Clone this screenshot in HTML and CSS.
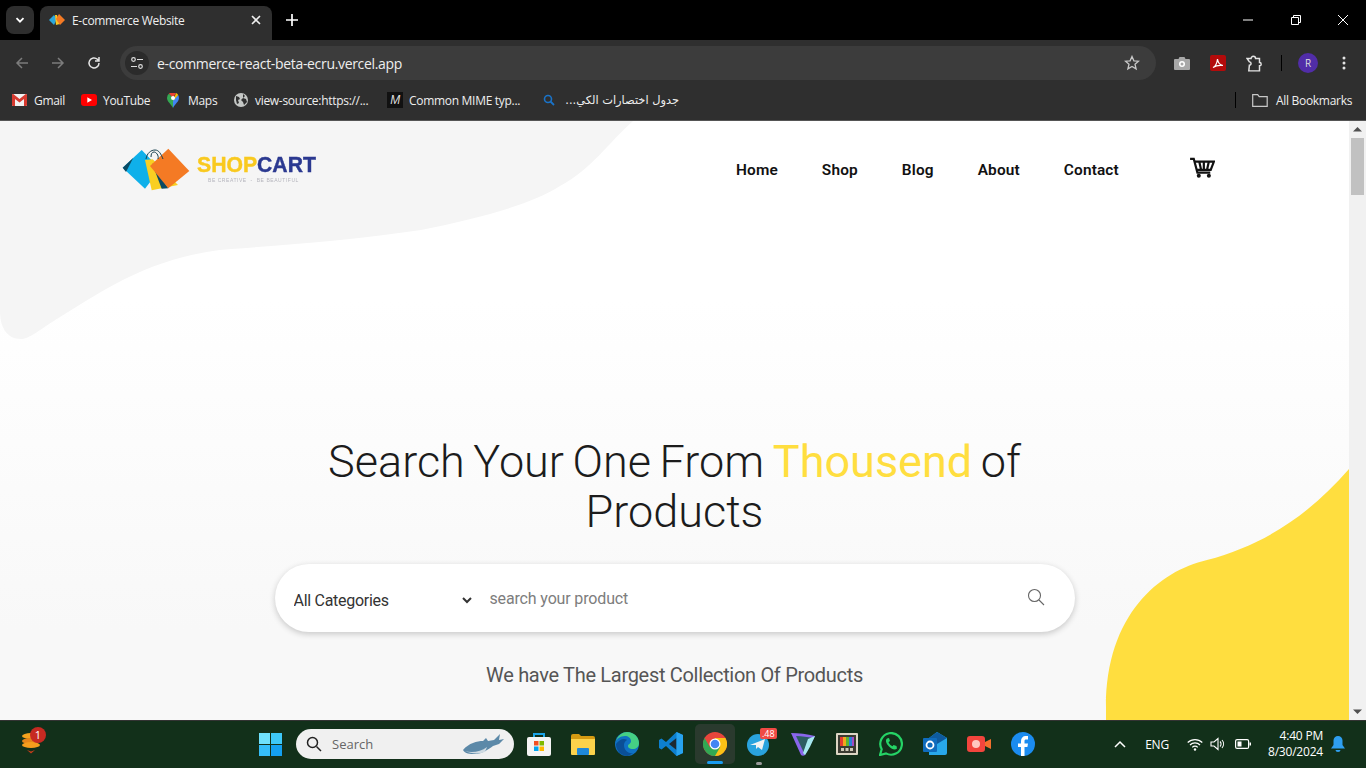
FILE: index.html
```html
<!DOCTYPE html>
<html lang="en">
<head>
<meta charset="utf-8">
<title>E-commerce Website</title>
<link rel="stylesheet" href="styles.css">
</head>
<body>
<div class="app">
  <div class="tabstrip">
    <button class="tab-menu"><svg width="12" height="12" viewBox="0 0 12 12"><path d="M2.5 4.2 6 7.7l3.5-3.5" fill="none" stroke="#fff" stroke-width="1.8"/></svg></button>
    <div class="tab">
      <svg class="favicon" width="16" height="12" viewBox="0 0 16 12"><path d="M0 6 5 1l3 4-3 6z" fill="#2aa7dc"/><path d="M6 1h2l3 9-4 1z" fill="#f9c622"/><path d="M10 0l6 6-5 5-4-6z" fill="#f47a24"/></svg>
      <span class="tab-title">E-commerce Website</span>
      <svg class="tab-close" width="10" height="10" viewBox="0 0 10 10"><path d="M1 1l8 8M9 1 1 9" stroke="#eee" stroke-width="1.6"/></svg>
    </div>
    <svg class="new-tab" width="12" height="12" viewBox="0 0 12 12"><path d="M6 0v12M0 6h12" stroke="#fff" stroke-width="1.7"/></svg>
    <div class="win-controls">
      <svg width="10" height="10" viewBox="0 0 10 10"><path d="M0 5h10" stroke="#fff"/></svg>
      <svg width="10" height="10" viewBox="0 0 10 10"><path d="M.5 2.5h7v7h-7zM2.5 2.5V.5h7v7h-2" fill="none" stroke="#fff"/></svg>
      <svg width="10" height="10" viewBox="0 0 10 10"><path d="M0 0l10 10M10 0 0 10" stroke="#fff"/></svg>
    </div>
  </div>

  <div class="toolbar">
    <svg class="nav-ico" width="14" height="14" viewBox="0 0 14 14"><path d="M13 7H2M7 2 2 7l5 5" fill="none" stroke="#7c7c7c" stroke-width="1.5"/></svg>
    <svg class="nav-ico" width="14" height="14" viewBox="0 0 14 14"><path d="M1 7h11M7 2l5 5-5 5" fill="none" stroke="#7c7c7c" stroke-width="1.5"/></svg>
    <svg class="nav-ico" width="14" height="14" viewBox="0 0 14 14"><path d="M12 7a5 5 0 1 1-1.6-3.7L12 5M12 1v4H8" fill="none" stroke="#e4e4e4" stroke-width="1.5"/></svg>
    <div class="omnibox">
      <span class="site-btn"><svg width="14" height="14" viewBox="0 0 14 14"><circle cx="3.5" cy="3.5" r="1.8" fill="none" stroke="#ddd" stroke-width="1.2"/><path d="M7 3.5h6M1 10.5h6" stroke="#ddd" stroke-width="1.2"/><circle cx="10.5" cy="10.5" r="1.8" fill="none" stroke="#ddd" stroke-width="1.2"/></svg></span>
      <span class="url">e-commerce-react-beta-ecru.vercel.app</span>
      <svg class="star" width="16" height="16" viewBox="0 0 16 16"><path d="M8 1.5l1.9 4.3 4.6.4-3.5 3 1.1 4.6L8 11.4l-4.1 2.4L5 9.2l-3.5-3 4.6-.4z" fill="none" stroke="#c8c8c8" stroke-width="1.3"/></svg>
    </div>
    <div class="tool-icons">
      <svg class="t-cam" width="16" height="14" viewBox="0 0 16 14"><path d="M1 3h3.500l1-2h5l1 2H15a1 1 0 0 1 1 1v9a1 1 0 0 1-1 1H1a1 1 0 0 1-1-1V4a1 1 0 0 1 1-1z" fill="#a8a8a8"/><circle cx="8" cy="8" r="3" fill="#fff"/><circle cx="8" cy="8" r="1.500" fill="#a8a8a8"/></svg>
      <svg class="t-pdf" width="16" height="16" viewBox="0 0 16 16"><rect width="16" height="16" rx="2" fill="#b30b0b"/><path d="M3 12.500c2-1 4-4 4.500-8.500.5 4 2.500 6 5.500 6.500-3-.5-7 0-10 2z" fill="none" stroke="#fff" stroke-width="1.200"/></svg>
      <svg class="t-ext" width="18" height="18" viewBox="0 0 16 16"><path d="M1 4h3.500a2 2 0 0 1 4 0H12v3.500a1.500 1.500 0 0 1 0 3V15H2.500L3 10a1.500 1.500 0 0 0 0-3L1 4z" fill="none" stroke="#e4e4e4" stroke-width="1.300"/></svg>
      <span class="t-sep"></span>
      <span class="avatar">R</span>
      <svg class="t-more" width="4" height="14" viewBox="0 0 4 14"><circle cx="2" cy="2" r="1.500" fill="#e4e4e4"/><circle cx="2" cy="7" r="1.500" fill="#e4e4e4"/><circle cx="2" cy="12" r="1.500" fill="#e4e4e4"/></svg>
    </div>
  </div>

  <div class="bookmarks">
    <div class="bm bm-gmail"><svg width="15" height="12" viewBox="0 0 15 12"><rect width="15" height="12" rx="1" fill="#f2f2f2"/><path d="M0 1v10a1 1 0 0 0 1 1h2V5l4.500 3.500L12 5v7h2a1 1 0 0 0 1-1V1a1 1 0 0 0-1.600-.8L7.500 5 1.600.2A1 1 0 0 0 0 1z" fill="#d63a30"/></svg><span>Gmail</span></div>
    <div class="bm bm-yt"><svg width="16" height="12" viewBox="0 0 16 12"><rect width="16" height="12" rx="3" fill="#f00"/><path d="M6.300 3.300v5.400L11 6z" fill="#fff"/></svg><span>YouTube</span></div>
    <div class="bm bm-maps"><svg width="12" height="15" viewBox="0 0 12 15"><path d="M6 15C4 11 0 8.500 0 5a6 6 0 0 1 2-4.400L6 5z" fill="#34a853"/><path d="M6 15c2-4 6-6.500 6-10 0-1-.3-2-.8-2.900L6 5z" fill="#4285f4"/><path d="M2 .6A6 6 0 0 1 9 .1L6 5z" fill="#ea4335"/><path d="M9 .1a6 6 0 0 1 2.200 2L6 8z" fill="#fbbc04"/><circle cx="6" cy="5" r="2" fill="#fff"/></svg><span>Maps</span></div>
    <div class="bm bm-globe"><svg width="14" height="14" viewBox="0 0 14 14"><circle cx="7" cy="7" r="7" fill="#c4c7c5"/><path d="M2 3l3 1 1 2-2 1 1 3-2 1-1-4zM9 1l2 2-2 2 3 1 1 3-3 3-1-3-2-2 2-2z" fill="#2f2f2f"/></svg><span>view-source:https://...</span></div>
    <div class="bm bm-mime"><span class="m-box">M</span><span>Common MIME typ...</span></div>
    <div class="bm bm-find"><svg width="12" height="12" viewBox="0 0 12 12"><circle cx="5" cy="5" r="3.500" fill="none" stroke="#1a73c8" stroke-width="1.600"/><path d="M7.500 7.500 11 11" stroke="#1a73c8" stroke-width="1.800"/></svg><span class="ar" dir="rtl">جدول اختصارات الكي...</span></div>
    <span class="bm-sep"></span>
    <div class="bm bm-all"><svg width="16" height="13" viewBox="0 0 16 13"><path d="M.7.700h5l1.500 2h8v9.600H.7z" fill="none" stroke="#c8c8c8" stroke-width="1.200"/></svg><span>All Bookmarks</span></div>
  </div>

  <div class="viewport">
    <main class="page">
      <svg class="blob blob-top" width="640" height="225" viewBox="0 0 640 225"><path d="M0 0H633C608 22 592 48 560 65C530 84 480 97 421 109C360 118 290 124 231 128C150 134 95 175 60 196C40 208 30 218 21 218C6 218 0 205 0 190Z" fill="#f5f5f5"/></svg>
      <svg class="blob blob-yellow" width="245" height="255" viewBox="0 0 245 255"><path d="M245 4C205 50 160 80 103 95C55 106 2 150 2 242V255H245Z" fill="#ffde3f"/></svg>

      <header class="site-header">
        <a class="logo">
          <svg class="logo-mark" width="70" height="46" viewBox="0 0 70 46">
            <path d="M19.700 3 .7 20.700 23 41.700 38 22z" fill="#0fb0ea"/>
            <path d="M.7 20.700 11.300 10.700 4 25z" fill="#0b4a63"/>
            <path d="M23 13 30.700 12.300 56 38 29.700 43.300z" fill="#f9cf22"/>
            <path d="M30 16 46.300 41.300 39.700 41.700z" fill="#0b4a63"/>
            <path d="M46.300 1.700 67.300 24 46.300 41.300 28 19z" fill="#f47a24"/>
            <path d="M24 12c1-6 5-9 9-9s6 4 8 9M29 10c0-3 1-5 3-5s5 3 4 7" fill="none" stroke="#17414f" stroke-width="1"/>
          </svg>
          <span class="logo-text">
            <span class="logo-name"><span class="logo-shop">SHOP</span><span class="logo-cart">CART</span></span>
            <span class="logo-tag">BE CREATIVE &nbsp;-&nbsp; BE BEAUTIFUL</span>
          </span>
        </a>
        <nav class="site-nav">
          <a>Home</a><a>Shop</a><a>Blog</a><a>About</a><a>Contact</a>
        </nav>
        <svg class="cart" width="26" height="22" viewBox="0 0 28 24"><path d="M1 2h4l4 15h14" fill="none" stroke="#111" stroke-width="2.400"/><path d="M5.500 5H27l-3.500 9H8M11 5l2 9M16 5v9M21.500 5l-2 9" fill="none" stroke="#111" stroke-width="2.400"/><circle cx="10.500" cy="20.500" r="2.200" fill="#111"/><circle cx="21.500" cy="20.500" r="2.200" fill="#111"/></svg>
      </header>

      <section class="hero">
        <h1 class="hero-title">Search Your One From <span class="accent">Thousend</span> of Products</h1>
        <form class="search">
          <select class="search-cat"><option>All Categories</option></select>
          <input class="search-input" type="text" placeholder="search your product">
          <svg class="search-ico" width="18" height="18" viewBox="0 0 18 18"><circle cx="7.500" cy="7.500" r="6" fill="none" stroke="#666" stroke-width="1.100"/><path d="M12 12l5 5" stroke="#666" stroke-width="1.100"/></svg>
        </form>
        <p class="hero-sub">We have The Largest Collection Of Products</p>
      </section>
    </main>
    <aside class="scrollbar">
      <svg width="17" height="17" viewBox="0 0 17 17"><path d="M4 10.500 8.500 6l4.500 4.500z" fill="#505050"/></svg>
      <span class="thumb"></span>
      <svg width="17" height="17" viewBox="0 0 17 17"><path d="M4 6.500 8.500 11 13 6.500z" fill="#505050"/></svg>
    </aside>
  </div>

  <footer class="taskbar">
    <div class="tb-left">
      <svg width="28" height="32" viewBox="0 0 28 32"><ellipse cx="11" cy="11" rx="9" ry="3" fill="#f4a21e"/><ellipse cx="10" cy="16" rx="8" ry="3" fill="#e5851a"/><ellipse cx="11" cy="20" rx="9" ry="3" fill="#f49d1d"/><path d="M7 25l4 3.500 4-3.500-4 1.500z" fill="#c93c1a"/></svg>
      <span class="tb-badge">1</span>
    </div>
    <div class="tb-center">
      <span class="tb-slot tb-win"><svg width="23" height="23" viewBox="0 0 23 23"><path d="M0 0h11v11H0z" fill="#6fe0fb"/><path d="M12 0h11v11H12z" fill="#3ec8f8"/><path d="M0 12h11v11H0z" fill="#35bdf8"/><path d="M12 12h11v11H12z" fill="#14a0f0"/></svg></span>
      <div class="tb-search">
        <svg width="16" height="16" viewBox="0 0 16 16"><circle cx="6.500" cy="6.500" r="5" fill="none" stroke="#222" stroke-width="1.500"/><path d="M10.500 10.500 15 15" stroke="#222" stroke-width="1.500"/></svg>
        <span>Search</span>
        <svg class="shark" width="42" height="22" viewBox="0 0 42 22"><path d="M0 17c6-7 14-9 20-9l3-3 2 3 6-1 6-6-1 6 5-1-5 5-6 2c-4 3-11 8-18 8-5 0-10 0-12-4z" fill="#5c89a8"/><path d="M2 18c6 2 16 1 22-4l-2 5c-5 2-14 2-20-1z" fill="#cfdbe2"/></svg>
      </div>
      <span class="tb-slot"><svg width="24" height="24" viewBox="0 0 24 24"><path d="M7 5V2h10v3" fill="none" stroke="#1ba4e8" stroke-width="2"/><rect y="5" width="24" height="19" rx="2" fill="#f4f4f4"/><path d="M7 9h4.500v4.500H7z" fill="#f25022"/><path d="M12.500 9H17v4.500h-4.500z" fill="#7fba00"/><path d="M7 14.500h4.500V19H7z" fill="#00a4ef"/><path d="M12.500 14.500H17V19h-4.500z" fill="#ffb900"/></svg></span>
      <span class="tb-slot"><svg width="24" height="21" viewBox="0 0 24 21"><path d="M0 2a2 2 0 0 1 2-2h6l2 2h12a2 2 0 0 1 2 2v3H0z" fill="#d49a12"/><path d="M0 5h24v15a1 1 0 0 1-1 1H1a1 1 0 0 1-1-1z" fill="#fbd24b"/><rect x="6" y="14" width="12" height="7" rx="1" fill="#1e88d8"/></svg></span>
      <span class="tb-slot"><svg width="24" height="24" viewBox="0 0 24 24"><circle cx="12" cy="12" r="12" fill="#0f71c4"/><path d="M1 9C3 3 8 0 12 0c7 0 12 5 12 11 0 4-3 6-6 6-4 0-5-2-5-3 0-2 3-2 3-5 0-3-3-5-6-5-5 0-8 3-9 5z" fill="#45cf84"/><path d="M9 13c0 5 4 9 9 8l-5 3C6 24 1 19 1 12c2-3 5-5 8-5 2 0 3 1 3 1-2 1-3 3-3 5z" fill="#0a4f96"/></svg></span>
      <span class="tb-slot"><svg width="24" height="24" viewBox="0 0 24 24"><path d="M17.500 0 24 3v18l-6.500 3L7 14l-4.500 3.500L0 16V8l2.500-1.500L7 10z" fill="#0d7fcf"/><path d="M17.500 6v12L10 12z" fill="#1f1f1f" opacity=".9"/><path d="M17.500 0 24 3v18l-6.500 3z" fill="#28a3ef"/></svg></span>
      <span class="tb-slot tb-active"><svg width="24" height="24" viewBox="0 0 24 24"><circle cx="12" cy="12" r="12" fill="#e8453c"/><path d="M12 24A12 12 0 0 0 22.400 6H12l-1 5z" fill="#fbc116"/><path d="M12 24 17.200 15 12 12 6.800 15 1.600 6A12 12 0 0 0 12 24z" fill="#32a853"/><circle cx="12" cy="12" r="5.500" fill="#fff"/><circle cx="12" cy="12" r="4.300" fill="#4285f4"/></svg><i class="tb-line"></i></span>
      <span class="tb-slot"><svg width="24" height="24" viewBox="0 0 24 24"><circle cx="11" cy="13" r="11" fill="#2aa3de"/><path d="M3 13l15-6-3 11-4-3-2 2v-4z" fill="#f3f3f3"/></svg><b class="tg-badge">.48</b><i class="tb-dot"></i></span>
      <span class="tb-slot"><svg width="24" height="24" viewBox="0 0 24 24"><path d="M0 1c8 0 16 1 24 3L14 23c-1 1-3 1-4 0z" fill="#8a66ec"/><path d="M5 4c6 0 12 1 16 2l-8 15z" fill="#2c5c62"/><path d="M14 23c3-4 7-12 10-19l-7 3-5 14z" fill="#a6e9ef"/></svg></span>
      <span class="tb-slot"><svg width="22" height="22" viewBox="0 0 22 22"><rect width="22" height="22" rx="1" fill="#dcd6c4"/><rect x="2" y="2" width="18" height="18" fill="#3b3b32"/><path d="M4 4h3v9H4z" fill="#e53b30"/><path d="M7 4h3v9H7z" fill="#f2a81d"/><path d="M10 4h3v9h-3z" fill="#5cb531"/><path d="M13 4h3v9h-3z" fill="#2e7ed6"/><path d="M16 4h2v9h-2z" fill="#a24bc4"/><path d="M5 15h3v3H5zM9.500 15h3v3h-3zM14 15h3v3h-3z" fill="#cfcab8"/></svg></span>
      <span class="tb-slot"><svg width="24" height="24" viewBox="0 0 24 24"><path d="M1 23l1.700-5.800A10.800 10.800 0 1 1 7 21.400z" fill="none" stroke="#25d366" stroke-width="2.200"/><path d="M8 6.500c-2 1.500-1 5 2 8s6 4 8 2l-.5-2.500-3-1-1 1.300c-2-1-3-2-4-4L11 9l-1-3z" fill="#25d366"/></svg></span>
      <span class="tb-slot"><svg width="24" height="24" viewBox="0 0 24 24"><path d="M6 6l8-6 10 6v15a2 2 0 0 1-2 2H6z" fill="#28a8ea"/><path d="M14 0l10 6-10 6-8-6z" fill="#0e5a9e"/><rect y="6" width="14" height="14" rx="1" fill="#0f6cbd"/><circle cx="7" cy="13" r="3.500" fill="none" stroke="#fff" stroke-width="1.800"/></svg></span>
      <span class="tb-slot"><svg width="24" height="16" viewBox="0 0 24 16"><rect width="18" height="16" rx="3" fill="#f2453d"/><circle cx="9" cy="8" r="4" fill="#ffc9c2"/><path d="M18 6l6-3v10l-6-3z" fill="#f2702d"/></svg></span>
      <span class="tb-slot"><svg width="24" height="24" viewBox="0 0 24 24"><circle cx="12" cy="12" r="12" fill="#1b8cf0"/><path d="M10 24v-9H7v-3.500h3V9c0-3 2-5 4.500-5H17v3.500h-2c-1 0-1.500.5-1.500 1.500v2.500H17l-.6 3.500h-2.900V24z" fill="#fff"/></svg></span>
    </div>
    <div class="tb-tray">
      <svg class="tr-caret" width="12" height="8" viewBox="0 0 12 8"><path d="M1 7l5-5 5 5" fill="none" stroke="#fff" stroke-width="1.500"/></svg>
      <span class="tr-lang">ENG</span>
      <svg class="tr-wifi" width="16" height="13" viewBox="0 0 16 13"><path d="M.7 4.500a10.500 10.500 0 0 1 14.600 0M3 7a7 7 0 0 1 10 0M5.300 9.300a3.600 3.600 0 0 1 5.400 0" fill="none" stroke="#fff" stroke-width="1.200"/><circle cx="8" cy="11.500" r="1.200" fill="#fff"/></svg>
      <svg class="tr-vol" width="16" height="14" viewBox="0 0 16 14"><path d="M1 5h3l4-3.500v11L4 9H1z" fill="none" stroke="#fff" stroke-width="1.100"/><path d="M10 4.500a3.500 3.500 0 0 1 0 5M12 3a6 6 0 0 1 0 8" fill="none" stroke="#fff" stroke-width="1.100"/></svg>
      <svg class="tr-bat" width="16" height="10" viewBox="0 0 16 10"><rect x=".6" y=".6" width="13" height="8.800" rx="1.500" fill="none" stroke="#fff" stroke-width="1.200"/><rect x="2.500" y="2.500" width="4" height="5" fill="#fff"/><rect x="14.500" y="3.500" width="1.500" height="3" fill="#fff"/></svg>
      <span class="tr-clock"><span>4:40 PM</span><span>8/30/2024</span></span>
      <svg class="tr-bell" width="14" height="16" viewBox="0 0 14 16"><path d="M7 0a4.500 4.500 0 0 1 4.500 4.500V9L14 12.500H0L2.500 9V4.500A4.500 4.500 0 0 1 7 0z" fill="#2f9ff0"/><path d="M4.500 14h5a2.500 2 0 0 1-5 0z" fill="#2f9ff0"/></svg>
    </div>
  </footer>
</div>
</body>
</html>
```
FILE: styles.css
```css
* { box-sizing: border-box; }
html, body { margin: 0; height: 100%; overflow: hidden; }
body { font-family: "Open Sans", "DejaVu Sans", sans-serif; }
.app { display: flex; flex-direction: column; height: 768px; width: 1366px; }
svg { display: block; flex: none; }

/* browser tabs */
.tabstrip { display: flex; height: 40px; background: #000; position: relative; flex: none; }
.tab-menu { width: 28px; height: 28px; margin: 6px 0 0 6px; background: #2e2e2e; border: 0; border-radius: 8px; display: flex; align-items: center; justify-content: center; padding: 0; }
.tab { width: 232px; height: 34px; margin: 6px 0 0 6px; background: #2f2f2f; border-radius: 8px 8px 0 0; display: flex; align-items: center; padding: 0 11px 6px 9px; color: #eee; }
.tab-title { font: 12px "Open Sans", sans-serif; letter-spacing: -.3px; margin-left: 7px; flex: 1; }
.new-tab { margin: 14px 0 0 14px; }
.win-controls { margin-left: auto; display: flex; gap: 37px; padding: 15px 18px 0 0; }
.win-controls svg:nth-child(1) { margin-right: 1px; }

/* toolbar */
.toolbar { display: flex; align-items: center; height: 46px; background: #2f2f2f; flex: none; padding: 0 0 0 15px; }
.nav-ico { margin-right: 22px; }
.nav-ico:nth-child(3) { margin-right: 19px; }
.omnibox { width: 1036px; height: 34px; background: #3c3c3c; border-radius: 17px; display: flex; align-items: center; padding: 0 16px 0 5px; }
.site-btn { width: 24px; height: 24px; border-radius: 50%; background: #2b2b2b; display: flex; align-items: center; justify-content: center; }
.url { font: 14px "Open Sans", sans-serif; color: #eee; margin-left: 8px; letter-spacing: -.33px; flex: 1; }
.tool-icons { display: flex; align-items: center; flex: 1; padding-left: 18px; }
.t-pdf { margin-left: 20px; }
.t-ext { margin-left: 20px; }
.t-sep { width: 1px; height: 16px; background: #000; margin-left: 17px; }
.avatar { width: 20px; height: 20px; border-radius: 50%; background: #512da8; color: #ddd; font: 10px "Open Sans", sans-serif; display: flex; align-items: center; justify-content: center; margin-left: 16px; }
.t-more { margin-left: 24px; }

/* bookmarks */
.bookmarks { display: flex; align-items: center; height: 35px; background: #2f2f2f; border-bottom: 1px solid #555; flex: none; padding: 0 0 6px 12px; color: #eee; font: 12px "Open Sans", sans-serif; letter-spacing: -.3px; }
.bm { display: flex; align-items: center; white-space: nowrap; }
.bm-gmail { width: 69px; gap: 7px; }
.bm-yt { width: 86px; gap: 6px; }
.bm-maps { width: 67px; gap: 9px; }
.bm-globe { width: 153px; gap: 7px; }
.bm-mime { width: 156px; gap: 6px; }
.m-box { width: 16px; height: 16px; background: #111; font: italic 400 12px "Liberation Sans", sans-serif; display: flex; align-items: center; justify-content: center; color: #ddd; }
.bm-find { gap: 10px; width: 692px; }
.ar { font: 11.400px "DejaVu Sans", sans-serif; width: 114px; text-align: right; letter-spacing: 0; }
.bm-sep { width: 1px; height: 16px; background: #000; margin-right: 16px; }
.bm-all { gap: 8px; }

/* page */
.viewport { flex: 1; display: flex; min-height: 0; }
.page { flex: 1; position: relative; overflow: hidden; background: linear-gradient(#fff 30%, #f8f8f8 85%); color: #111; font-family: Roboto, sans-serif; }
.blob { position: absolute; }
.blob-top { left: 0; top: 0; }
.blob-yellow { right: 0; bottom: 0; }
.scrollbar { width: 17px; background: #f1f1f1; display: flex; flex-direction: column; align-items: center; }
.thumb { width: 13px; height: 57px; background: #c1c1c1; margin-bottom: auto; }

.site-header { position: relative; display: flex; align-items: flex-start; padding: 26px 134px 0 122px; height: 96px; }
.logo { display: flex; gap: 5px; width: 614px; }
.logo-text { display: flex; flex-direction: column; padding-top: 7px; filter: blur(.3px); }
.logo-name { font: 700 21.200px/22px "Liberation Sans", sans-serif; -webkit-text-stroke: .4px; }
.logo-shop { color: #f9c91f; }
.logo-cart { color: #2b3990; }
.logo-tag { font: 5px/6px "Liberation Sans", sans-serif; letter-spacing: .55px; color: #b5b5bd; white-space: nowrap; padding: 1px 0 0 11px; }
.site-nav { display: flex; gap: 44px; padding-top: 14px; font: 600 15.400px/18px Roboto, sans-serif; letter-spacing: .15px; }
.cart { margin-left: auto; margin-top: 10px; }

.hero { position: relative; display: flex; flex-direction: column; align-items: center; padding-top: 220px; }
.hero-title { width: 800px; margin: 0; text-align: center; font: 300 45px/50px Roboto, sans-serif; letter-spacing: 0; word-spacing: -2.400px; color: #1c1c1c; }
.accent { color: #ffde3f; font-weight: 400; }
.search { width: 800px; height: 68px; margin-top: 27px; background: #fff; border-radius: 34px; box-shadow: 0 2px 6px rgba(0,0,0,.2); display: flex; align-items: center; padding: 0 30px 0 15px; }
.search-cat { width: 185px; height: 40px; border: 0; background: #fff; font: 16px Roboto, sans-serif; letter-spacing: -.28px; color: #333; outline: 0; margin-top: 4px; }
.search-input { flex: 1; border: 0; outline: 0; background: transparent; font: 16px Roboto, sans-serif; letter-spacing: -.15px; padding: 0 0 0 15px; color: #222; }
.search-input::placeholder { color: #7d7d7d; }
.search-ico { margin-top: -2px; }
.hero-sub { margin: 29px 0 0; font: 400 20px/28px Roboto, sans-serif; letter-spacing: -.31px; color: #555; }

/* taskbar */
.taskbar { position: relative; height: 48px; background: #12301a; box-shadow: inset 0 1px #333; flex: none; display: flex; }
.tb-left { position: relative; width: 248px; padding: 5px 0 0 20px; }
.tb-badge { position: absolute; left: 30px; top: 7px; width: 16px; height: 16px; border-radius: 50%; background: #c62a22; color: #fff; font: 11px/16px "Open Sans", sans-serif; text-align: center; }
.tb-center { display: flex; align-items: center; }
.tb-slot { position: relative; width: 44px; height: 40px; display: flex; align-items: center; justify-content: center; }
.tb-win { margin-right: 4px; }
.tb-search { width: 218px; height: 30px; border-radius: 15px; background: #f0f0f0; display: flex; align-items: center; padding: 0 9px 0 10px; margin-right: 3px; color: #666; font: 13px "Open Sans", sans-serif; }
.tb-search span { margin-left: 10px; flex: 1; }
.tb-active { background: #2a3a2e; border-radius: 5px; width: 40px; margin: 0 2px; }
.tb-line { position: absolute; left: 12px; bottom: 0; width: 16px; height: 3px; border-radius: 2px; background: #1a9cf0; }
.tb-dot { position: absolute; left: 19px; bottom: -1px; width: 6px; height: 3px; border-radius: 2px; background: #9a9a9a; }
.tg-badge { position: absolute; left: 23px; top: 4px; background: #f04a45; color: #fff; font: 400 9px/11px "Open Sans", sans-serif; padding: 0 2px; border-radius: 2px; }
.tb-tray { margin-left: auto; display: flex; align-items: center; color: #fff; padding-right: 21px; }
.tr-caret { margin-right: 1px; }
.tr-lang { font: 12px "Open Sans", sans-serif; margin-left: 18px; letter-spacing: -.2px; }
.tr-wifi { margin-left: 18px; }
.tr-vol { margin-left: 7px; }
.tr-bat { margin-left: 9px; }
.tr-clock { display: flex; flex-direction: column; align-items: flex-end; font: 12px/16px "Open Sans", sans-serif; letter-spacing: -.2px; margin-left: 17px; }
.tr-bell { margin-left: 8px; }
```
